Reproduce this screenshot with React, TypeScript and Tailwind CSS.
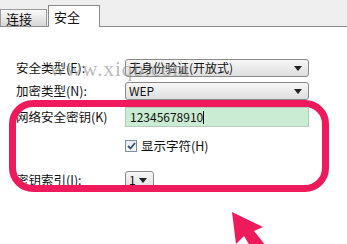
import React from "react";

const font = { fontFamily: '"Noto Sans CJK SC", "DejaVu Sans", sans-serif' };

const Caret = () => (
  <svg width="8" height="5" viewBox="0 0 8 5" className="shrink-0">
    <polygon points="0,0 8,0 4,5" fill="#222" />
  </svg>
);

interface SelectProps {
  value: string;
  w: string;
}

const FakeSelect: React.FC<SelectProps> = ({ value, w }) => (
  <div
    className={`${w} h-[18px] flex items-center justify-between pl-[3px] pr-[6px] border border-[#8a8a8a] rounded-[3px] bg-gradient-to-b from-[#f7f7f7] to-[#dedede] text-[12px] leading-[16px] text-[#111]`}
  >
    <span className="whitespace-nowrap">{value}</span>
    <Caret />
  </div>
);

export default function App() {
  return (
    <div className="relative w-[347px] h-[244px] bg-white overflow-hidden text-[#111]" style={font}>
      {/* tabs */}
      <div className="h-[27px] bg-[#efefef] border-b border-[#8c8c8c] flex items-end">
        <div className="w-[47px] h-[17px] border border-b-0 border-[#9a9a9a] bg-gradient-to-b from-[#fafafa] to-[#d6d6d6] text-[13px] leading-none flex items-center pl-[5px]">
          连接
        </div>
        <div className="w-[52px] h-[22px] -mb-px ml-px border border-b-0 border-[#8c8c8c] bg-white text-[13px] leading-none pt-[4px] pl-[5px]">
          安全
        </div>
      </div>

      <div className="mt-[32px] flex flex-col gap-[5px] pl-[16px]">
        <div className="flex items-center">
          <span className="w-[109px] text-[12.5px] leading-[16px]">安全类型(E):</span>
          <FakeSelect value="无身份验证(开放式)" w="w-[184px]" />
        </div>
        <div className="flex items-center">
          <span className="w-[109px] text-[12.5px] leading-[16px]">加密类型(N):</span>
          <FakeSelect value="WEP" w="w-[184px]" />
        </div>
      </div>

      {/* highlight box */}
      <div className="ml-[9px] w-[320px] h-[92px] border-[7px] border-[#ee1a5c] rounded-[24px] pr-[13px] overflow-hidden">
        <div className="flex items-center">
          <span className="w-[109px] text-[12.5px] leading-[16px]">网络安全密钥(K)</span>
          <div className="w-[184px] h-[20px] border border-[#b9c9bd] bg-[#c9ecd2] flex items-center pl-[4px] text-[12px] leading-[16px]">
            12345678910
            <span className="w-px h-[13px] bg-black" />
          </div>
        </div>
        <div className="mt-[11px] ml-[109px] flex items-center gap-[4px]">
          <div className="w-[12px] h-[12px] border border-[#7b8ea6] bg-gradient-to-b from-[#e6ecf3] to-[#f8f8f8] flex items-center justify-center">
            <svg width="9" height="8" viewBox="0 0 9 8">
              <polyline points="1,4 3.5,6.5 8,1" fill="none" stroke="#3a4f6c" strokeWidth="1.8" />
            </svg>
          </div>
          <span className="text-[12.5px] leading-[16px]">显示字符(H)</span>
        </div>
        <div className="mt-[17px] flex items-center">
          <span className="w-[109px] text-[12.5px] leading-[16px]">密钥索引(I):</span>
          <FakeSelect value="1" w="w-[29px]" />
        </div>
      </div>

      {/* watermark */}
      <div
        className="absolute z-10 left-[50px] top-[59px] text-[21px] leading-none text-[#8f8f8f] opacity-60 tracking-[1px]"
        style={{ fontFamily: '"Liberation Serif", serif' }}
      >
        www.xiqb.com
      </div>

      {/* arrow */}
      <svg className="absolute left-[226px] top-[206px]" width="50" height="40" viewBox="0 0 50 40">
        <polygon points="6,6 37,21 28,25 40,40 24,40 18,30 10,38" fill="#ee1a5c" />
      </svg>
    </div>
  );
}
